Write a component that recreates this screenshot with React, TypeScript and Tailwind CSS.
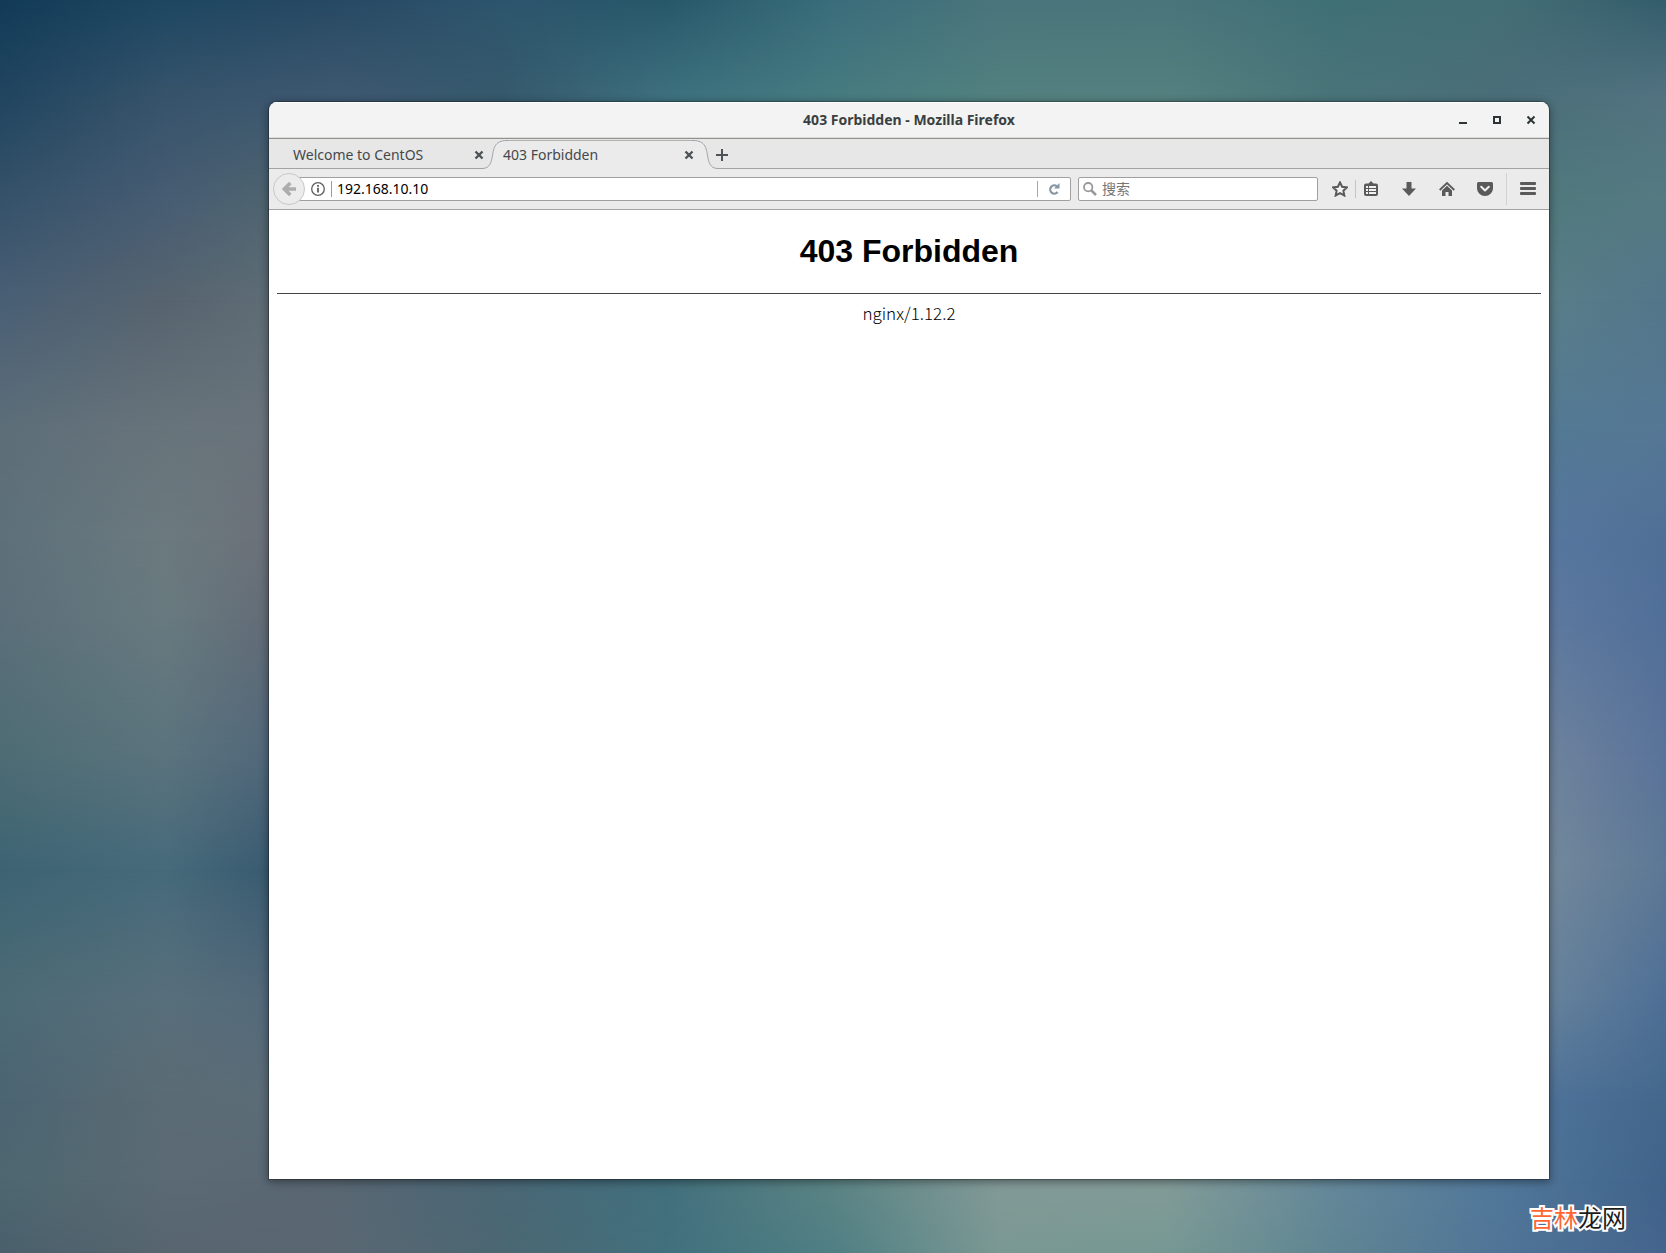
import type { ReactNode } from "react";

// Wallpaper colours, left to right, at each height of the 1666 x 1253 artwork.
const WALLPAPER: { y: number; colors: string[] }[] = [
  { y: 0, colors: ["#123b58", "#1e4761", "#284963", "#2d556d", "#27586a", "#3a6d7b", "#4a757c", "#4a757b", "#3f7075", "#446e76", "#345d6b"] },
  { y: 95, colors: ["#21455f", "#36536b", "#3d5871", "#36596c", "#3d707e", "#467b80", "#52807f", "#54807f", "#497479", "#4a6e79", "#527280"] },
  { y: 200, colors: ["#35526a", "#475d73", "#50656f", "#4f797c", "#557a82"] },
  { y: 300, colors: ["#495f75", "#57646f", "#5f6e77", "#5a7f88", "#53768a"] },
  { y: 430, colors: ["#5d6e79", "#68747b", "#6a737b", "#537a94", "#557895"] },
  { y: 540, colors: ["#5e707a", "#6b7a7f", "#6b6f78", "#5878a0", "#506f96"] },
  { y: 620, colors: ["#5b6f7a", "#687a7f", "#626a76", "#5f7aa0", "#516f98"] },
  { y: 760, colors: ["#4d6c74", "#5a737d", "#4f667a", "#71859d", "#5a739a"] },
  { y: 870, colors: ["#3d6473", "#466a7b", "#38596f", "#758a9c", "#5d7895"] },
  { y: 1000, colors: ["#4c6a75", "#586f7b", "#53687a", "#69849c", "#4e6f96"] },
  { y: 1100, colors: ["#4b6572", "#5b6b74", "#5c6d78", "#4f739a", "#44688c"] },
  { y: 1180, colors: ["#4d6770", "#5b6a74", "#596773", "#4a6776", "#42707d", "#5c8484", "#839a98", "#839c98", "#65889a", "#51789a", "#40638a"] },
  { y: 1253, colors: ["#4a606c", "#57656f", "#5a6773", "#4b6772", "#42707d", "#4f7f84", "#7a9893", "#769893", "#5f8592", "#507497", "#44648c"] },
];

const SIDE_STOPS = [0, 0.1, 0.17, 0.92, 1];

function Wallpaper() {
  return (
    <svg
      className="absolute inset-0 h-full w-full"
      viewBox="0 0 1666 1253"
      preserveAspectRatio="none"
      aria-hidden
    >
      <defs>
        {WALLPAPER.map(({ y, colors }, i) => (
          <linearGradient key={y} id={`row-${i}`}>
            {colors.map((color, c) => (
              <stop
                key={c}
                offset={colors.length === 5 ? SIDE_STOPS[c] : c / (colors.length - 1)}
                stopColor={color}
              />
            ))}
          </linearGradient>
        ))}
        {WALLPAPER.slice(1).map(({ y }, i) => (
          <linearGradient
            key={y}
            id={`fade-${i + 1}`}
            gradientUnits="userSpaceOnUse"
            x1="0"
            x2="0"
            y1={WALLPAPER[i].y}
            y2={y}
          >
            <stop offset="0" stopColor="#000" />
            <stop offset="1" stopColor="#fff" />
          </linearGradient>
        ))}
        {WALLPAPER.slice(1).map(({ y }, i) => (
          <mask
            key={y}
            id={`mask-${i + 1}`}
            maskUnits="userSpaceOnUse"
            x="0"
            y="0"
            width="1666"
            height="1253"
          >
            <rect width="1666" height="1253" fill={`url(#fade-${i + 1})`} />
          </mask>
        ))}
      </defs>
      {WALLPAPER.map(({ y }, i) => (
        <rect
          key={y}
          width="1666"
          height="1253"
          fill={`url(#row-${i})`}
          mask={i > 0 ? `url(#mask-${i})` : undefined}
        />
      ))}
    </svg>
  );
}

function WindowButton({ label, children }: { label: string; children: ReactNode }) {
  return (
    <button type="button" aria-label={label} className="flex h-full w-[34px] items-center justify-center">
      <svg width="10" height="10" viewBox="0 0 10 10" fill="none" stroke="#2e3436" strokeWidth="2">
        {children}
      </svg>
    </button>
  );
}

function TitleBar() {
  return (
    <header className="flex h-[37px] items-stretch border-b border-[#8f928d] bg-[#f3f3f3] pr-px shadow-[inset_0_1px_0_#ffffff,inset_0_-1px_0_#dcdcda]">
      <div className="w-[103px]" />
      <h1 className="flex-1 self-center text-center text-sm font-bold text-[#3a3f41]">
        403 Forbidden - Mozilla Firefox
      </h1>
      <WindowButton label="最小化">
        <path d="M1 8h8" />
      </WindowButton>
      <WindowButton label="最大化">
        <path d="M2 2h6v6h-6z" />
      </WindowButton>
      <WindowButton label="关闭">
        <path d="M1.5 1.5l7 7M8.5 1.5l-7 7" />
      </WindowButton>
    </header>
  );
}

function TabShape() {
  return (
    <div className="-ml-[7px] -mr-[19px] flex [grid-area:1/1]" aria-hidden>
      <svg width="26" height="30" viewBox="0 0 26 30" fill="none">
        <path d="M0 29.5C6 29.5 8.5 26 10 19.5C11.5 10 12 1.5 25 1.5H26V30H0Z" fill="#ebebeb" />
        <path d="M0 29.5C6 29.5 8.5 26 10 19.5C11.5 10 12 1.5 25 1.5H26" stroke="#a3a3a6" />
      </svg>
      <div className="mt-px h-[29px] flex-1 border-t border-[#b0b0b0] bg-[#ebebeb]" />
      <svg width="26" height="30" viewBox="0 0 26 30" fill="none">
        <path d="M26 29.5C20 29.5 17.5 26 16 19.5C14.5 10 14 1.5 1 1.5H0V30H26Z" fill="#ebebeb" />
        <path d="M26 29.5C20 29.5 17.5 26 16 19.5C14.5 10 14 1.5 1 1.5H0" stroke="#a3a3a6" />
      </svg>
    </div>
  );
}

function Tab({ title, active }: { title: string; active?: boolean }) {
  return (
    <div className="grid h-[30px] w-[210px]">
      {active && <TabShape />}
      <div className="flex items-center justify-between pt-0.5 pl-[14px] pr-[5px] [grid-area:1/1]">
        <button type="button" role="tab" aria-selected={!!active} className="text-sm text-[#45484a]">
          {title}
        </button>
        <button type="button" aria-label={`关闭 ${title}`}>
          <svg width="10" height="10" viewBox="0 0 10 10" stroke="#4d5254" strokeWidth="2.4">
            <path d="M1.5 1.5l7 7M8.5 1.5l-7 7" />
          </svg>
        </button>
      </div>
    </div>
  );
}

function TabStrip() {
  return (
    <div className="flex h-[30px] bg-[#e7e7e7] pl-[10px] shadow-[inset_0_-1px_0_#a3a3a3]" role="tablist">
      <Tab title="Welcome to CentOS" />
      <Tab title="403 Forbidden" active />
      <button type="button" aria-label="新建标签页" className="ml-[13px] flex w-5 items-center justify-center pt-0.5">
        <svg width="12" height="12" viewBox="0 0 12 12" stroke="#505355" strokeWidth="2">
          <path d="M6 0v12M0 6h12" />
        </svg>
      </button>
    </div>
  );
}

function AddressBar() {
  return (
    <div className="-ml-2 flex h-6 flex-1 items-center rounded-xs border border-[#a0a0a0] bg-white pl-[13px]">
      <button type="button" aria-label="站点信息">
        <svg width="14" height="14" viewBox="0 0 14 14" fill="none" stroke="#5b5e60">
          <circle cx="7" cy="7" r="6.3" strokeWidth="1.3" />
          <path d="M7 5.8v4.7M7 3v1.7" strokeWidth="1.8" />
        </svg>
      </button>
      <div className="ml-1.5 h-4 w-px bg-[#9a9a9a]" />
      <input
        type="text"
        aria-label="地址"
        defaultValue="192.168.10.10"
        className="ml-[5px] min-w-0 flex-1 bg-transparent text-sm text-black outline-none"
      />
      <div className="h-4 w-px bg-[#a6a6a6]" />
      <button type="button" aria-label="重新载入" className="flex w-8 justify-center">
        <svg width="12" height="12" viewBox="0 0 12 12" fill="none">
          <path d="M8.8 3.2A4.1 4.1 0 1 0 9.6 9" stroke="#8796a3" strokeWidth="2.2" />
          <path d="M11.5 0v5.5H6Z" fill="#8796a3" />
        </svg>
      </button>
    </div>
  );
}

function SearchBox() {
  return (
    <label className="ml-[7px] flex h-6 w-60 items-center rounded-xs border border-[#a0a0a0] bg-white pl-1">
      <svg width="14" height="14" viewBox="0 0 14 14" fill="none" stroke="#999999" aria-hidden>
        <circle cx="5.2" cy="5.2" r="4.2" strokeWidth="1.8" />
        <path d="M8.3 8.3l4.7 4.7" strokeWidth="2.6" />
      </svg>
      <input
        type="text"
        aria-label="搜索"
        placeholder="搜索"
        className="ml-[5px] min-w-0 flex-1 bg-transparent text-sm outline-none placeholder:text-[#757575]"
      />
    </label>
  );
}

function ToolButton({ label, className, children }: { label: string; className: string; children: ReactNode }) {
  return (
    <button type="button" aria-label={label} className={`flex h-8 items-center justify-center ${className}`}>
      <svg width="16" height="16" viewBox="0 0 16 16" fill="#5a5a5a">
        {children}
      </svg>
    </button>
  );
}

function Toolbar() {
  return (
    <nav className="flex h-[41px] items-center border-b border-[#a3a3a3] bg-[#ebebeb] pl-1">
      <button
        type="button"
        aria-label="后退"
        className="z-10 flex h-8 w-8 items-center justify-center rounded-full border border-[#c8c8c8] bg-[#ececec]"
      >
        <svg width="14" height="14" viewBox="0 0 14 14" fill="none" stroke="#adadad" strokeWidth="3.6">
          <path d="M8.3 1L2.3 7l6 6M3 7H14" />
        </svg>
      </button>
      <AddressBar />
      <SearchBox />
      <ToolButton label="加入书签" className="ml-2 w-7">
        <path
          d="M8 1.4l2.1 4.4 4.8.6-3.5 3.3.9 4.8L8 12.200l-4.300 2.300.900-4.800L1.100 6.400 5.900 5.800Z"
          fill="#f4f4f4"
          stroke="#5a5a5a"
          strokeWidth="2"
        />
      </ToolButton>
      <div className="ml-px h-[18px] w-px bg-[#c4c4c4]" />
      <ToolButton label="书签" className="mr-1 w-[30px]">
        <path d="M3 2.5h2.500L8 0l2.500 2.500H13a2 2 0 0 1 2 2V13a2 2 0 0 1-2 2H3a2 2 0 0 1-2-2V4.500a2 2 0 0 1 2-2Z" />
        <path d="M3 5h2v2H3zM6 5h7v2H6zM3 8h2v2H3zM6 8h7v2H6zM3 11h2v2H3zM6 11h7v2H6z" fill="#f1f1f1" />
      </ToolButton>
      <ToolButton label="下载" className="w-[38px]">
        <path d="M5.5 1h5v6.500H15L8 15 1 7.500h4.500Z" />
      </ToolButton>
      <ToolButton label="主页" className="w-[38px]">
        <path d="M8 4.8l5 4.700V15H9.500v-4h-3v4H3V9.500Z" />
        <path d="M.7 9L8 2l7.300 7" fill="none" stroke="#5a5a5a" strokeWidth="1.8" />
      </ToolButton>
      <ToolButton label="Pocket" className="w-[38px]">
        <path d="M1.5 1h13A1.500 1.500 0 0 1 16 2.500V7.500a8 7.500 0 0 1-16 0V2.500A1.500 1.500 0 0 1 1.500 1Z" />
        <path d="M4.2 5.800L8 9.500l3.800-3.700" fill="none" stroke="#f1f1f1" strokeWidth="2" strokeLinecap="round" strokeLinejoin="round" />
      </ToolButton>
      <div className="ml-0.5 h-8 w-px bg-[#d2d2d2]" />
      <ToolButton label="菜单" className="w-[42px]">
        <rect y="1" width="16" height="3" rx="1" />
        <rect y="6" width="16" height="3" rx="1" />
        <rect y="11" width="16" height="3" rx="1" />
      </ToolButton>
    </nav>
  );
}

function Page() {
  return (
    <main className="flex-1 bg-white px-2 text-center text-black">
      <h2 className="pt-[21px] font-['Liberation_Sans',sans-serif] text-[32px] leading-10 font-bold">
        403 Forbidden
      </h2>
      <hr className="mt-[22px] border-t border-[#444444]" />
      <p className="mt-[7px] font-['Noto_Sans_CJK_SC',sans-serif] text-[17px] leading-6 font-light">
        nginx/1.12.2
      </p>
    </main>
  );
}

export default function App() {
  return (
    <div className="relative flex min-h-screen bg-[#4b6772] pt-[102px] pr-[117px] pb-[74px] pl-[269px] font-['Noto_Sans','Noto_Sans_CJK_SC',sans-serif]">
      <Wallpaper />
      <section className="relative flex min-w-0 flex-1 flex-col overflow-hidden rounded-t-lg shadow-[0_0_0_1px_rgba(0,0,0,0.25),0_2px_8px_1px_rgba(0,0,0,0.4)]">
        <TitleBar />
        <TabStrip />
        <Toolbar />
        <Page />
      </section>
      <p className="absolute right-10 bottom-6 font-['Noto_Sans_CJK_SC',sans-serif] text-2xl leading-6 font-normal text-[#1c1c1c] [-webkit-text-stroke:4px_#ffffff] [paint-order:stroke_fill]">
        <span className="text-[#ff6633]">吉林</span>龙网
      </p>
    </div>
  );
}
